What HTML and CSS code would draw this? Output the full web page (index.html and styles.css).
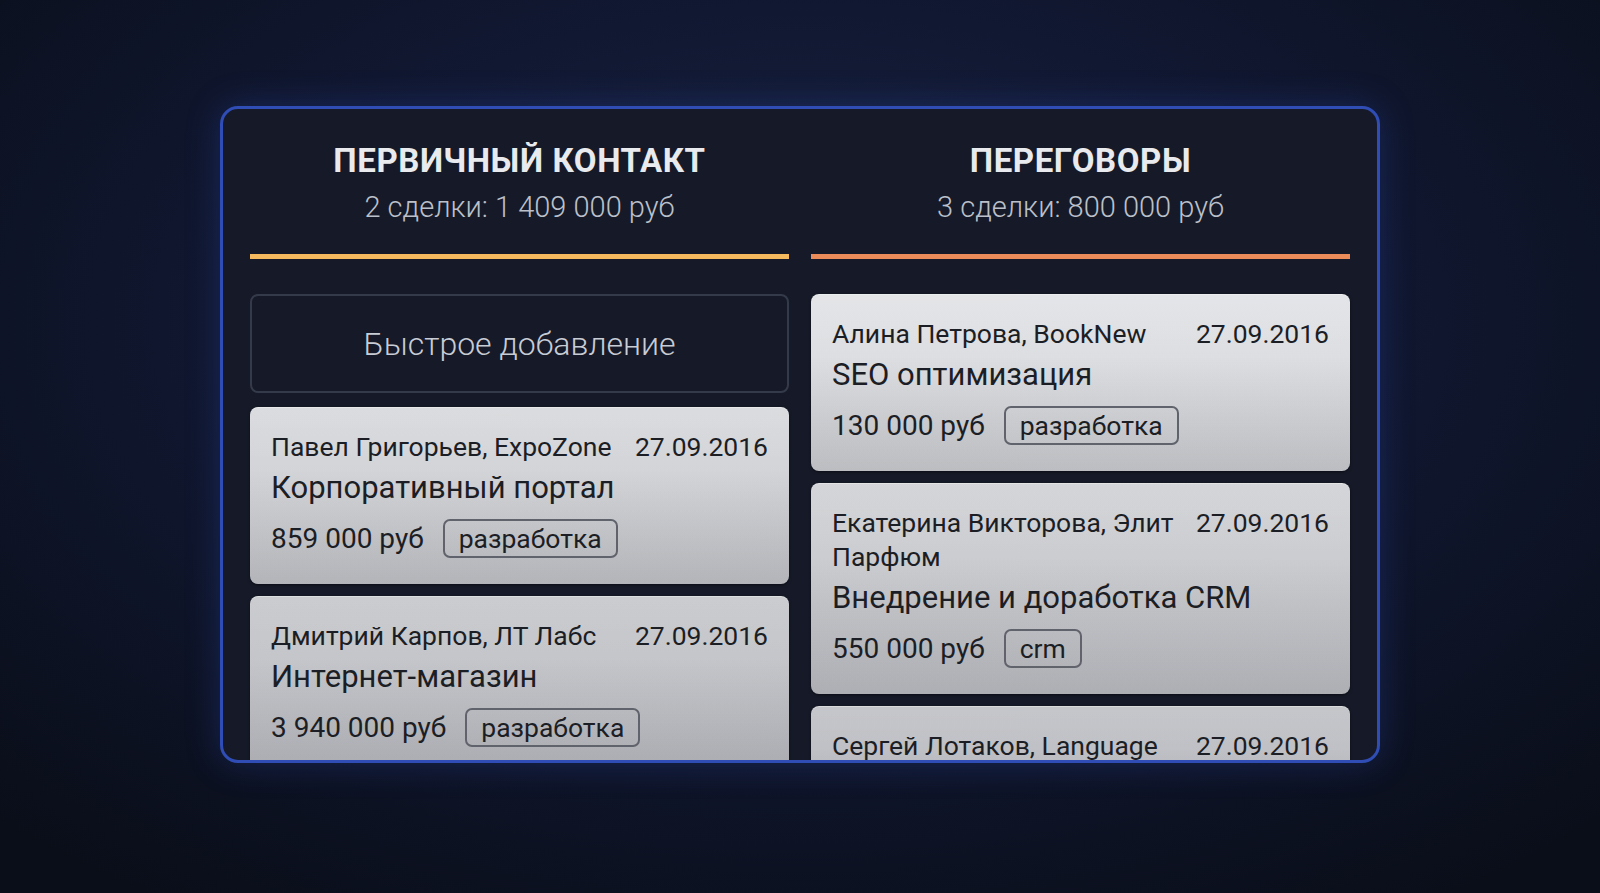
FILE: index.html
```html
<!DOCTYPE html>
<html lang="ru">
<head>
<meta charset="utf-8">
<title>Воронка сделок</title>
<link rel="stylesheet" href="styles.css">
</head>
<body>
<main class="board">
  <section class="column">
    <header class="column-head">
      <h2 class="column-title">ПЕРВИЧНЫЙ КОНТАКТ</h2>
      <p class="column-sum">2 сделки: 1 409 000 руб</p>
      <div class="column-bar bar-yellow"></div>
    </header>
    <div class="cards">
      <div class="quick-add">Быстрое добавление</div>
      <article class="deal">
        <div class="deal-top"><span class="deal-client">Павел Григорьев, ExpoZone</span><span class="deal-date">27.09.2016</span></div>
        <div class="deal-name">Корпоративный портал</div>
        <div class="deal-row"><span class="deal-sum">859 000 руб</span><span class="deal-tag">разработка</span></div>
      </article>
      <article class="deal">
        <div class="deal-top"><span class="deal-client">Дмитрий Карпов, ЛТ Лабс</span><span class="deal-date">27.09.2016</span></div>
        <div class="deal-name">Интернет-магазин</div>
        <div class="deal-row"><span class="deal-sum">3 940 000 руб</span><span class="deal-tag">разработка</span></div>
      </article>
    </div>
  </section>
  <section class="column">
    <header class="column-head">
      <h2 class="column-title">ПЕРЕГОВОРЫ</h2>
      <p class="column-sum">3 сделки: 800 000 руб</p>
      <div class="column-bar bar-orange"></div>
    </header>
    <div class="cards">
      <article class="deal">
        <div class="deal-top"><span class="deal-client">Алина Петрова, BookNew</span><span class="deal-date">27.09.2016</span></div>
        <div class="deal-name">SEO оптимизация</div>
        <div class="deal-row"><span class="deal-sum">130 000 руб</span><span class="deal-tag">разработка</span></div>
      </article>
      <article class="deal">
        <div class="deal-top"><span class="deal-client">Екатерина Викторова, Элит Парфюм</span><span class="deal-date">27.09.2016</span></div>
        <div class="deal-name">Внедрение и доработка CRM</div>
        <div class="deal-row"><span class="deal-sum">550 000 руб</span><span class="deal-tag">crm</span></div>
      </article>
      <article class="deal deal-partial">
        <div class="deal-top"><span class="deal-client">Сергей Лотаков, Language</span><span class="deal-date">27.09.2016</span></div>
      </article>
    </div>
  </section>
</main>
</body>
</html>
```

FILE: styles.css
```css
* { box-sizing: border-box; }

html, body {
  margin: 0;
  height: 100%;
}

body {
  background: radial-gradient(ellipse 72% 78% at 50% 36%, #19233f 0%, #111832 45%, #0a0e19 100%);
  font-family: Roboto, "Noto Sans", sans-serif;
  display: flex;
  justify-content: center;
  padding-top: 106px;
  overflow: hidden;
}

.board {
  width: 1160px;
  height: 657px;
  border: 3px solid #2f4db4;
  border-radius: 18px;
  background: #161a28;
  box-shadow: 0 0 34px rgba(45, 80, 190, 0.3);
  padding: 0 27px;
  display: grid;
  grid-template-columns: 1fr 1fr;
  column-gap: 22px;
  overflow: hidden;
}

.column {
  display: flex;
  flex-direction: column;
  min-width: 0;
}

.column-head {
  padding-top: 32px;
  text-align: center;
}

.column-title {
  margin: 0;
  font-size: 33px;
  line-height: 40px;
  font-weight: 700;
  letter-spacing: 0.6px;
  color: #e9eaee;
}

.column-sum {
  margin: 8px 0 0;
  font-size: 29px;
  line-height: 36px;
  font-weight: 300;
  color: #bcc0ca;
}

.column-bar {
  margin-top: 29px;
  height: 5px;
}

.bar-yellow { background: #f6b95e; }
.bar-orange { background: #ec8b5a; }

.cards {
  margin-top: 35px;
  display: flex;
  flex-direction: column;
  gap: 12px;
}

.quick-add {
  height: 99px;
  margin-bottom: 2px;
  border: 2px solid #353a4b;
  border-radius: 8px;
  display: flex;
  align-items: center;
  justify-content: center;
  font-size: 32px;
  font-weight: 300;
  color: #c8ccd5;
}

.deal {
  border-radius: 8px;
  background:
    linear-gradient(180deg, rgba(255, 255, 255, 0.06) 0%, rgba(0, 0, 0, 0) 35%, rgba(20, 22, 30, 0.12) 100%),
    linear-gradient(180deg, #e2e3e6 300px, #c8c9cd 600px, #bdbec3 800px) fixed;
  box-shadow: 0 1px 3px rgba(0, 0, 0, 0.5), inset 0 1px 0 rgba(255, 255, 255, 0.35);
  padding: 23px 21px 26px;
  color: #1c1e25;
  flex-shrink: 0;
}

.deal-partial {
  min-height: 120px;
}

.deal-top {
  display: flex;
  justify-content: space-between;
  align-items: flex-start;
  gap: 10px;
  font-size: 26.5px;
  line-height: 34px;
}

.deal-client {
  flex: 1;
  min-width: 0;
}

.deal-date {
  flex-shrink: 0;
}

.deal-name {
  margin-top: 5px;
  font-size: 31px;
  line-height: 38px;
}

.deal-row {
  margin-top: 12px;
  display: flex;
  align-items: center;
  gap: 19px;
  height: 39px;
}

.deal-sum {
  font-size: 28px;
  line-height: 39px;
}

.deal-tag {
  height: 39px;
  border: 2px solid #60636c;
  border-radius: 7px;
  padding: 0 14px;
  font-size: 26.5px;
  line-height: 35px;
}
```
